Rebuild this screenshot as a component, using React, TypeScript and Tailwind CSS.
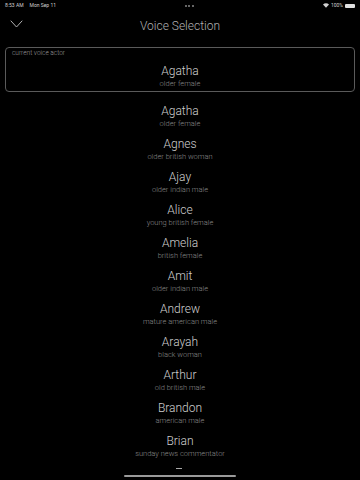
const voices = [
  { name: "Agatha", desc: "older female" },
  { name: "Agnes", desc: "older british woman" },
  { name: "Ajay", desc: "older indian male" },
  { name: "Alice", desc: "young british female" },
  { name: "Amelia", desc: "british female" },
  { name: "Amit", desc: "older indian male" },
  { name: "Andrew", desc: "mature american male" },
  { name: "Arayah", desc: "black woman" },
  { name: "Arthur", desc: "old british male" },
  { name: "Brandon", desc: "american male" },
  { name: "Brian", desc: "sunday news commentator" },
];

function StatusBar() {
  return (
    <div className="h-[11px] flex items-center justify-between px-[5px] text-[5px] text-[#d0d0d0]">
      <div className="flex gap-[6px]">
        <span>8:53 AM</span>
        <span>Mon Sep 11</span>
      </div>
      <div className="flex gap-[1.5px]">
        <span className="w-[2px] h-[2px] rounded-full bg-[#888]" />
        <span className="w-[2px] h-[2px] rounded-full bg-[#888]" />
        <span className="w-[2px] h-[2px] rounded-full bg-[#888]" />
      </div>
      <div className="flex items-center gap-[2px]">
        <svg width="6" height="5" viewBox="0 0 12 9">
          <path d="M6 9L0 2.5C3.5-0.8 8.5-0.8 12 2.5Z" fill="#d0d0d0" />
        </svg>
        <span>100%</span>
        <span className="w-[10px] h-[4px] rounded-[1px] bg-[#e0e0e0]" />
      </div>
    </div>
  );
}

export default function App() {
  return (
    <div className="w-[360px] h-[480px] bg-black overflow-hidden relative" style={{ fontFamily: "Roboto, 'Liberation Sans', sans-serif" }}>
      <StatusBar />

      <div className="h-[29px] flex items-center relative">
        <svg className="absolute left-[10px] top-[9px]" width="13" height="8" viewBox="0 0 13 8" fill="none">
          <path d="M1 1L6.5 7L12 1" stroke="#b0b0b0" strokeWidth="1" strokeLinecap="round" strokeLinejoin="round" />
        </svg>
        <div className="w-full text-center text-[12px] font-light text-[#b0b0b0]">Voice Selection</div>
      </div>

      <div className="mx-[5px] mt-[7px] h-[45px] border border-[#5a5a5a] rounded-[4px] px-[6px] pt-[1px]">
        <div className="text-[6.5px] font-light text-[#9a9a9a] leading-[9px]">current voice actor</div>
        <div className="text-center mt-[6px]">
          <div className="text-[12px] font-light text-[#cfcfcf] leading-[15px]">Agatha</div>
          <div className="text-[7.5px] font-light text-[#8a8a8a] leading-[9px]">older female</div>
        </div>
      </div>

      <div className="flex flex-col items-center mt-[12px]">
        {voices.map((v) => (
          <div key={v.name} className="h-[33px] flex flex-col items-center">
            <div className="text-[12px] font-light text-[#cfcfcf] leading-[15px]">{v.name}</div>
            <div className="text-[7.5px] font-light text-[#8a8a8a] leading-[9px]">{v.desc}</div>
          </div>
        ))}
        <div className="w-[6px] h-[1px] bg-[#aaa] mt-[1px] -ml-[3px]" />
      </div>

      <div className="absolute bottom-[3px] left-1/2 -translate-x-1/2 w-[112px] h-[2px] rounded-full bg-[#9a9a9a]" />
    </div>
  );
}
